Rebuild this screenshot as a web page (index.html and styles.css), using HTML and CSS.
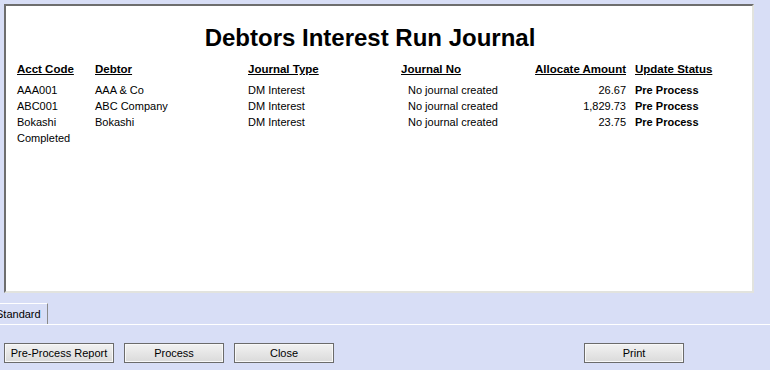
FILE: index.html
```html
<!DOCTYPE html>
<html lang="en">
<head>
    <meta charset="UTF-8">
    <title>Debtors Interest Run Journal</title>
    <link rel="stylesheet" href="styles.css">
</head>
<body>
    <div class="report">
        <h1>Debtors Interest Run Journal</h1>
        <div class="journal">
            <div class="row head">
                <span>Acct Code</span>
                <span>Debtor</span>
                <span>Journal Type</span>
                <span>Journal No</span>
                <span class="amount">Allocate Amount</span>
                <span>Update Status</span>
            </div>
            <div class="row">
                <span>AAA001</span>
                <span>AAA &amp; Co</span>
                <span>DM Interest</span>
                <span class="jno">No journal created</span>
                <span class="amount">26.67</span>
                <span class="status">Pre Process</span>
            </div>
            <div class="row">
                <span>ABC001</span>
                <span>ABC Company</span>
                <span>DM Interest</span>
                <span class="jno">No journal created</span>
                <span class="amount">1,829.73</span>
                <span class="status">Pre Process</span>
            </div>
            <div class="row">
                <span>Bokashi</span>
                <span>Bokashi</span>
                <span>DM Interest</span>
                <span class="jno">No journal created</span>
                <span class="amount">23.75</span>
                <span class="status">Pre Process</span>
            </div>
            <div class="row">
                <span>Completed</span>
            </div>
        </div>
    </div>

    <div class="tabs">
        <div class="tab">Standard</div>
    </div>

    <div class="buttons">
        <button class="wide">Pre-Process Report</button>
        <button>Process</button>
        <button>Close</button>
        <button class="print">Print</button>
    </div>
</body>
</html>
```

FILE: styles.css
```css
body {
    margin: 0;
    background-color: #d8def6;
    font-family: "Liberation Sans", Arial, sans-serif;
    font-size: 11px;
    color: #000;
}

.report {
    box-sizing: border-box;
    width: 750px;
    height: 289px;
    margin: 4px 0 0 4px;
    background-color: #ffffff;
    border: 2px solid;
    border-color: #6e6e6e #e2e3de #e2e3de #6e6e6e;
}

h1 {
    margin: 18px 0 9px 0;
    padding-right: 18px;
    font-size: 24px;
    line-height: 28px;
    text-align: center;
}

.journal {
    padding-left: 11px;
}

.row {
    display: grid;
    grid-template-columns: 78px 153px 153px 119px 106px auto;
    height: 16px;
    line-height: 16px;
    white-space: nowrap;
}

.row .amount {
    text-align: right;
}

.row span:nth-child(6) {
    padding-left: 9px;
}

.head {
    font-size: 11.5px;
    font-weight: bold;
    text-decoration: underline;
    margin-bottom: 5px;
}

.jno {
    padding-left: 7px;
}

.status {
    font-weight: bold;
}

.tabs {
    display: flex;
    margin-top: 10px;
    height: 21px;
    border-bottom: 1px solid #ffffff;
    overflow: hidden;
}

.tab {
    margin-left: -9px;
    padding: 0 6px 0 5px;
    line-height: 21px;
    height: 20px;
    border-top: 1px solid #ffffff;
    border-right: 1px solid #8a8a8a;
}

.buttons {
    display: flex;
    gap: 10px;
    margin: 18px 0 0 4px;
}

button {
    box-sizing: border-box;
    width: 100px;
    height: 20px;
    padding: 0;
    font-family: "Liberation Sans", Arial, sans-serif;
    font-size: 11px;
    color: #000;
    background: linear-gradient(#f2f2f2, #dadada);
    border: 1px solid #6b6b6b;
    box-shadow: inset 0 0 0 1px #f8f8f8;
}

button.wide {
    width: 110px;
}

button.print {
    margin-left: 240px;
}
```
